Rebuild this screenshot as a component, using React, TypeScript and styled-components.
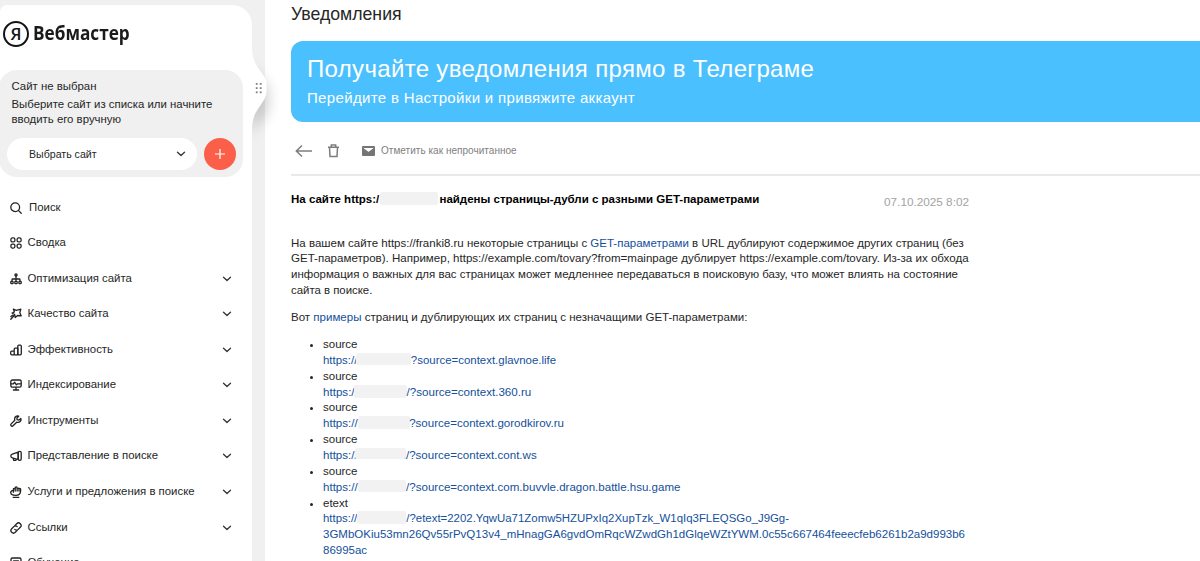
import React from 'react';
import styled, { createGlobalStyle } from 'styled-components';

const GlobalStyle = createGlobalStyle`
  * {
    box-sizing: border-box;
  }

  body {
    margin: 0;
    overflow: hidden;
    background: #fff;
    color: #262626;
    font-family: "Liberation Sans", Arial, sans-serif;
    font-size: 11.5px;
  }
`;

const Page = styled.div`
  display: flex;
  height: 561px;
  overflow: hidden;
`;

// Sidebar
const SidebarRail = styled.div`
  position: relative;
  flex: none;
  width: 265px;
  padding: 5px 13px 0 0;
  background: #f0f0f0;
`;

const Sidebar = styled.aside`
  height: 100%;
  padding-top: 15px;
  background: #fff;
  border-radius: 7px 20px 0 0;
`;

const Handle = styled.svg`
  position: absolute;
  top: 40px;
  left: 251px;
  overflow: visible;
`;

const Logo = styled.div`
  display: flex;
  align-items: center;
  gap: 3.5px;
  height: 27px;
  padding-left: 3px;
`;

const LogoMark = styled.div`
  display: flex;
  align-items: center;
  justify-content: center;
  width: 26px;
  height: 26px;
  border: 2.2px solid #141414;
  border-radius: 50%;
  color: #141414;
  font: 600 17px/20px "Open Sans", sans-serif;
`;

const LogoText = styled.span`
  color: #1a1a1a;
  font-family: "Open Sans", sans-serif;
  font-size: 19px;
  font-weight: 700;
  line-height: 27px;
  transform: scaleX(0.905);
  transform-origin: left center;
`;

const SitePanel = styled.div`
  width: 243.5px;
  height: 107px;
  margin: 23px 0 0 -1px;
  padding: 7.5px 4px 0 8px;
  background: #f0f0f0;
  border-radius: 18px;
`;

const SiteTitle = styled.div`
  padding-left: 4.5px;
  font-size: 11.4px;
  line-height: 17px;
`;

const SiteHint = styled.p`
  margin: 0;
  padding: 2px 0 0 4.5px;
  font-size: 11.4px;
  line-height: 15.6px;
`;

const SiteControls = styled.div`
  display: flex;
  gap: 7px;
  margin-top: 10.3px;
`;

const SiteSelect = styled.button`
  display: flex;
  flex: none;
  align-items: center;
  justify-content: space-between;
  width: 190px;
  height: 32px;
  padding: 1px 11.5px 0 22px;
  border: 0;
  border-radius: 16px;
  background: #fff;
  color: #262626;
  font-family: inherit;
  font-size: 10.6px;
`;

const AddButton = styled.button`
  display: flex;
  flex: none;
  align-items: center;
  justify-content: center;
  width: 32px;
  height: 32px;
  padding: 0;
  border: 0;
  border-radius: 50%;
  background: #fb5f49;
`;

const Menu = styled.nav`
  display: flex;
  flex-direction: column;
  padding-top: 12.4px;
`;

const MenuItem = styled.a<{ $gap?: number }>`
  display: flex;
  align-items: center;
  gap: ${(p) => p.$gap ?? 5.5}px;
  height: 35.55px;
  padding: 0 20px 0 10px;
  font-size: 11.4px;
  line-height: 14px;

  svg {
    flex: none;
    margin-top: 1px;
  }

  span {
    flex: 1;
    margin-top: -1px;
    white-space: nowrap;
  }
`;

// Main column
const Main = styled.main`
  flex: 1;
  min-width: 0;
  padding: 3px 0 0 26px;
  background: #fff;
`;

const PageTitle = styled.h1`
  margin: 0;
  font-size: 17.7px;
  font-weight: 400;
  line-height: 22px;
`;

const Banner = styled.section`
  height: 81px;
  margin-top: 16px;
  padding: 13px 16px;
  border-radius: 12px 0 0 12px;
  background: #4bc0ff;
  color: #fff;
`;

const BannerTitle = styled.div`
  font-size: 24px;
  letter-spacing: 0.33px;
  line-height: 30px;
`;

const BannerText = styled.div`
  margin-top: 4px;
  font-size: 15px;
  letter-spacing: 0.34px;
  line-height: 20px;
`;

const Toolbar = styled.div`
  display: flex;
  align-items: center;
  height: 54px;
  padding: 5px 0 0 4px;
  border-bottom: 2px solid #e9e9e9;
`;

const BackIcon = styled.svg`
  margin-right: 14.5px;
`;

const TrashIcon = styled.svg`
  margin-right: 23.5px;
`;

const MailIcon = styled.svg`
  margin-right: 6px;
`;

const ToolbarLabel = styled.span`
  color: #808080;
  font-size: 10px;
  letter-spacing: 0.03px;
`;

const Message = styled.article`
  width: 678px;
`;

const MessageHeader = styled.header`
  display: flex;
  justify-content: space-between;
  height: 59.5px;
  padding-top: 15px;
`;

const Subject = styled.h2`
  margin: 0;
  color: #000;
  font-size: 11.5px;
  font-weight: 700;
  line-height: 16px;
  white-space: nowrap;
`;

const MessageDate = styled.time`
  padding-top: 2.5px;
  color: #a3a3a3;
  font-size: 11.76px;
  line-height: 16px;
`;

const Paragraph = styled.p<{ $after: number }>`
  margin: 0 0 ${(p) => p.$after}px;
  line-height: 15.8px;
`;

const TextLine = styled.span<{ $size?: number }>`
  display: block;
  font-size: ${(p) => p.$size ?? 11.5}px;
  white-space: nowrap;
`;

const Link = styled.a`
  color: #14509b;
`;

const ParamList = styled.ul`
  margin: 0;
  padding-left: 32px;
  line-height: 15.87px;
`;

// Grey plate over a hidden domain name
const Redacted = styled.span<{ $width: number; $before?: number; $after?: number }>`
  display: inline-block;
  width: ${(p) => p.$width}px;
  height: 12.5px;
  margin: -2px ${(p) => p.$after ?? 0}px 0 ${(p) => p.$before ?? 0}px;
  border-radius: 2px;
  background: #f2f2f2;
  vertical-align: -1.5px;
`;

// Domain whose lower edge is still visible under the plate
const PartlyHidden = styled.span`
  position: relative;

  &::after {
    content: '';
    position: absolute;
    top: -1px;
    left: 0;
    right: 0;
    height: 11px;
    border-radius: 2px;
    background: #f2f2f2;
  }
`;

const Chevron = () => (
  <svg width="10" height="6" viewBox="0 0 10 6" fill="none" stroke="#333" strokeWidth="1.3">
    <path d="M1.5 1.3 5 4.500l3.500-3.200" strokeLinecap="round" strokeLinejoin="round" />
  </svg>
);

const MenuIcon = ({ children }: { children: React.ReactNode }) => (
  <svg
    width="12"
    height="12"
    viewBox="0 0 12 12"
    fill="none"
    stroke="#222"
    strokeWidth="1.3"
    strokeLinecap="round"
    strokeLinejoin="round"
  >
    {children}
  </svg>
);

const icons = {
  search: (
    <>
      <circle cx="5.2" cy="5.2" r="4.4" />
      <path d="m8.4 8.4 2.8 2.8" />
    </>
  ),
  summary: (
    <>
      <rect x=".9" y=".9" width="4" height="4" rx="1.500" />
      <rect x="7.100" y=".9" width="4" height="4" rx="1.500" />
      <rect x=".9" y="7.100" width="4" height="4" rx="1.500" />
      <rect x="7.100" y="7.100" width="4" height="4" rx="1.500" />
    </>
  ),
  tree: (
    <>
      <circle cx="6" cy="1.9" r="1.1" />
      <path d="M6 3v5M2 8V6.8Q2 6 2.8 6h6.4q.8 0 .8.8V8" />
      <rect x=".8" y="8.4" width="2.3" height="2.3" rx=".7" />
      <rect x="4.85" y="8.4" width="2.3" height="2.3" rx=".7" />
      <rect x="8.9" y="8.4" width="2.3" height="2.3" rx=".7" />
    </>
  ),
  quality: (
    <>
      <path d="M3.400 1.200 6.400 2.300 10.800 1.200 9.800 4.600l1.400 3.300-3.600-.4-2.400 2-.5-3L2 5l2.400-1z" />
      <path d="M4.400 7.200.8 11.200M2.600 7.300.9 8.600" />
    </>
  ),
  bars: (
    <>
      <path d="M4.2 10.8H1.7q-1 0-1-1V8.2q0-1 1-1h2.5M4.2 10.8V5.2q0-1 1-1h2.6v6.6z" />
      <rect x="7.8" y="1.2" width="3.5" height="9.6" rx="1" />
    </>
  ),
  monitor: (
    <>
      <rect x=".8" y="1" width="10.4" height="7.2" rx="1.6" />
      <path d="M1 4.8h2.4l1.3-1.5 1.7 2.5 1.2-1H11M6 8.3v2.6M3.4 11h5.2" />
    </>
  ),
  wrench: (
    <path d="M10.8 3.400 9 5 7.100 4.700 6.900 3l1.800-1.800C7 .4 4.600 1.600 4.600 4.100c0 .5.100.8.200 1.200L1.200 8.900c-1.200 1.300.6 3.200 1.900 1.900l3.600-3.600c3 .9 5-1.500 4.100-3.800z" />
  ),
  megaphone: (
    <>
      <path d="M8.2 2.2 2.3 4.1Q.8 4.6.8 6t1.5 1.8l5.9 1.7zM3.2 8.2l.5 2.2h2.2l.3-1.3" />
      <rect x="8.2" y="1.4" width="3" height="9" rx="1.4" />
    </>
  ),
  services: (
    <>
      <path d="M3.4 4.3c-1.700.2-2.700 1-2.700 2.300 0 1.800 1.700 2.800 4.900 2.800 3.600 0 5-1.600 5-4.600V3.300c0-1.100-1.600-1.100-1.600 0V5M3.400 6.200V3.400c0-1.500 1.800-1.500 1.800 0V5M5.200 4V1.900c0-1.400 1.900-1.400 1.900 0V5M7.100 3c0-1.200 1.900-1.200 1.900 0" />
      <path d="M3.2 11.3h5.6" />
    </>
  ),
  link: (
    <>
      <path d="M5 3.4 6.7 1.7a2.5 2.5 0 0 1 3.6 3.6L8.2 7.4a2.4 2.4 0 0 1-3.4 0" />
      <path d="M7 8.6 5.3 10.3a2.5 2.5 0 0 1-3.6-3.6l2.1-2.1a2.4 2.4 0 0 1 3.4 0" />
    </>
  ),
  learning: (
    <>
      <rect x="1" y="1" width="10" height="9.6" rx="1.4" />
      <path d="M3.6 3.8h4.8M3.6 6h4.8" />
    </>
  ),
};

const menu = [
  { label: 'Сводка', icon: icons.summary, nested: false },
  { label: 'Оптимизация сайта', icon: icons.tree, nested: true },
  { label: 'Качество сайта', icon: icons.quality, nested: true },
  { label: 'Эффективность', icon: icons.bars, nested: true },
  { label: 'Индексирование', icon: icons.monitor, nested: true },
  { label: 'Инструменты', icon: icons.wrench, nested: true },
  { label: 'Представление в поиске', icon: icons.megaphone, nested: true },
  { label: 'Услуги и предложения в поиске', icon: icons.services, nested: true },
  { label: 'Ссылки', icon: icons.link, nested: true },
  { label: 'Обучение', icon: icons.learning, nested: false },
];

const SideMenu = () => (
  <SidebarRail>
    <Sidebar>
      <Logo>
        <LogoMark>Я</LogoMark>
        <LogoText>Вебмастер</LogoText>
      </Logo>
      <SitePanel>
        <SiteTitle>Сайт не выбран</SiteTitle>
        <SiteHint>
          Выберите сайт из списка или начните
          <br />
          вводить его вручную
        </SiteHint>
        <SiteControls>
          <SiteSelect>
            Выбрать сайт
            <Chevron />
          </SiteSelect>
          <AddButton aria-label="+">
            <svg width="12" height="12" viewBox="0 0 12 12" stroke="#fff" strokeWidth="1.2">
              <path d="M6 1v10M1 6h10" />
            </svg>
          </AddButton>
        </SiteControls>
      </SitePanel>
      <Menu>
        <MenuItem $gap={7}>
          <MenuIcon>{icons.search}</MenuIcon>
          <span>Поиск</span>
        </MenuItem>
        {menu.map((item) => (
          <MenuItem key={item.label}>
            <MenuIcon>{item.icon}</MenuIcon>
            <span>{item.label}</span>
            {item.nested && <Chevron />}
          </MenuItem>
        ))}
      </Menu>
    </Sidebar>
    {/* Drag handle on the sidebar edge */}
    <Handle width="36" height="100" viewBox="0 0 36 100">
      <defs>
        <filter id="handleShadow" x="-150%" y="-50%" width="400%" height="200%">
          <feGaussianBlur stdDeviation="7" />
        </filter>
        <clipPath id="handleClip">
          <rect x="1" y="-10" width="50" height="130" />
        </clipPath>
      </defs>
      <g clipPath="url(#handleClip)">
        <path
          d="M0 22C2 38 17 40 17 54V64C17 78 2 82 0 98z"
          fill="#000"
          opacity=".2"
          filter="url(#handleShadow)"
        />
      </g>
      <path d="M0 8H1C1.500 20 5 25 10 32S15.600 40 15.600 45V50C15.600 57 13 60 9 66S1.500 76 1 88H0z" fill="#fff" />
      <g fill="#808080">
        <rect x="4.800" y="43" width="1.800" height="1.800" />
        <rect x="8.800" y="43" width="1.800" height="1.800" />
        <rect x="4.800" y="47.200" width="1.800" height="1.800" />
        <rect x="8.800" y="47.200" width="1.800" height="1.800" />
        <rect x="4.800" y="51.400" width="1.800" height="1.800" />
        <rect x="8.800" y="51.400" width="1.800" height="1.800" />
      </g>
    </Handle>
  </SidebarRail>
);

const App: React.FC = () => (
  <>
    <GlobalStyle />
    <Page>
      <SideMenu />
      <Main>
        <PageTitle>Уведомления</PageTitle>
        <Banner>
          <BannerTitle>Получайте уведомления прямо в Телеграме</BannerTitle>
          <BannerText>Перейдите в Настройки и привяжите аккаунт</BannerText>
        </Banner>

        <Toolbar>
          <BackIcon width="18" height="14" viewBox="0 0 18 14" fill="none" stroke="#7d7d7d" strokeWidth="1.5">
            <path d="M17 7H1.500M7 1.500 1.300 7 7 12.500" />
          </BackIcon>
          <TrashIcon width="11" height="14" viewBox="0 0 11 14" fill="none" stroke="#7d7d7d" strokeWidth="1.5">
            <path d="M0 3.200h11M3.300 3V1h4.400v2M1.500 3.500l.5 9h7l.5-9" />
          </TrashIcon>
          <MailIcon width="13" height="10" viewBox="0 0 13 10">
            <rect width="13" height="10" rx="1" fill="#757575" />
            <path d="M1.800 2 6.500 5.400 11.200 2" fill="#fff" stroke="#fff" strokeWidth=".8" />
          </MailIcon>
          <ToolbarLabel>Отметить как непрочитанное</ToolbarLabel>
        </Toolbar>

        <Message>
          <MessageHeader>
            <Subject>
              На сайте https:/
              <Redacted $width={58} $before={0.7} $after={-1.7} /> найдены страницы-дубли с разными GET-параметрами
            </Subject>
            <MessageDate>07.10.2025 8:02</MessageDate>
          </MessageHeader>

          <Paragraph $after={11}>
            <TextLine>
              На вашем сайте https://franki8.ru некоторые страницы с <Link>GET-параметрами</Link> в URL дублируют
              содержимое других страниц (без
            </TextLine>
            <TextLine $size={11.55}>
              GET-параметров). Например, https://example.com/tovary?from=mainpage дублирует
              https://example.com/tovary. Из-за их обхода
            </TextLine>
            <TextLine $size={11.47}>
              информация о важных для вас страницах может медленнее передаваться в поисковую базу, что может влиять на
              состояние
            </TextLine>
            <TextLine $size={11.4}>сайта в поиске.</TextLine>
          </Paragraph>
          <Paragraph $after={11.3}>
            <TextLine $size={11.54}>
              Вот <Link>примеры</Link> страниц и дублирующих их страниц с незначащими GET-параметрами:
            </TextLine>
          </Paragraph>

          <ParamList>
            <li>
              source
              <TextLine $size={11.45}>
                <Link>
                  https://
                  <Redacted $width={55} $before={-1} $after={-0.5} />
                  ?source=context.glavnoe.life
                </Link>
              </TextLine>
            </li>
            <li>
              source
              <TextLine $size={11.6}>
                <Link>
                  https:/
                  <Redacted $width={53} $before={-1} />
                  /?source=context.360.ru
                </Link>
              </TextLine>
            </li>
            <li>
              source
              <TextLine $size={11.55}>
                <Link>
                  https://
                  <Redacted $width={52} $after={-0.5} />
                  ?source=context.gorodkirov.ru
                </Link>
              </TextLine>
            </li>
            <li>
              source
              <TextLine $size={11.57}>
                <Link>
                  https:/<PartlyHidden>/franki8.ru</PartlyHidden>/?source=context.cont.ws
                </Link>
              </TextLine>
            </li>
            <li>
              source
              <TextLine $size={11.56}>
                <Link>
                  https://
                  <Redacted $width={48} $after={0.4} />
                  /?source=context.com.buvvle.dragon.battle.hsu.game
                </Link>
              </TextLine>
            </li>
            <li>
              etext
              <TextLine $size={11.43}>
                <Link>
                  https://
                  <Redacted $width={49} />
                  /?etext=2202.YqwUa71Zomw5HZUPxIq2XupTzk_W1qIq3FLEQSGo_J9Gg-
                </Link>
              </TextLine>
              <TextLine $size={11.52}>
                <Link>3GMbOKiu53mn26Qv55rPvQ13v4_mHnagGA6gvdOmRqcWZwdGh1dGlqeWZtYWM.0c55c667464feeecfeb6261b2a9d993b6</Link>
              </TextLine>
              <TextLine>
                <Link>86995ac</Link>
              </TextLine>
            </li>
          </ParamList>
        </Message>
      </Main>
    </Page>
  </>
);

export default App;
